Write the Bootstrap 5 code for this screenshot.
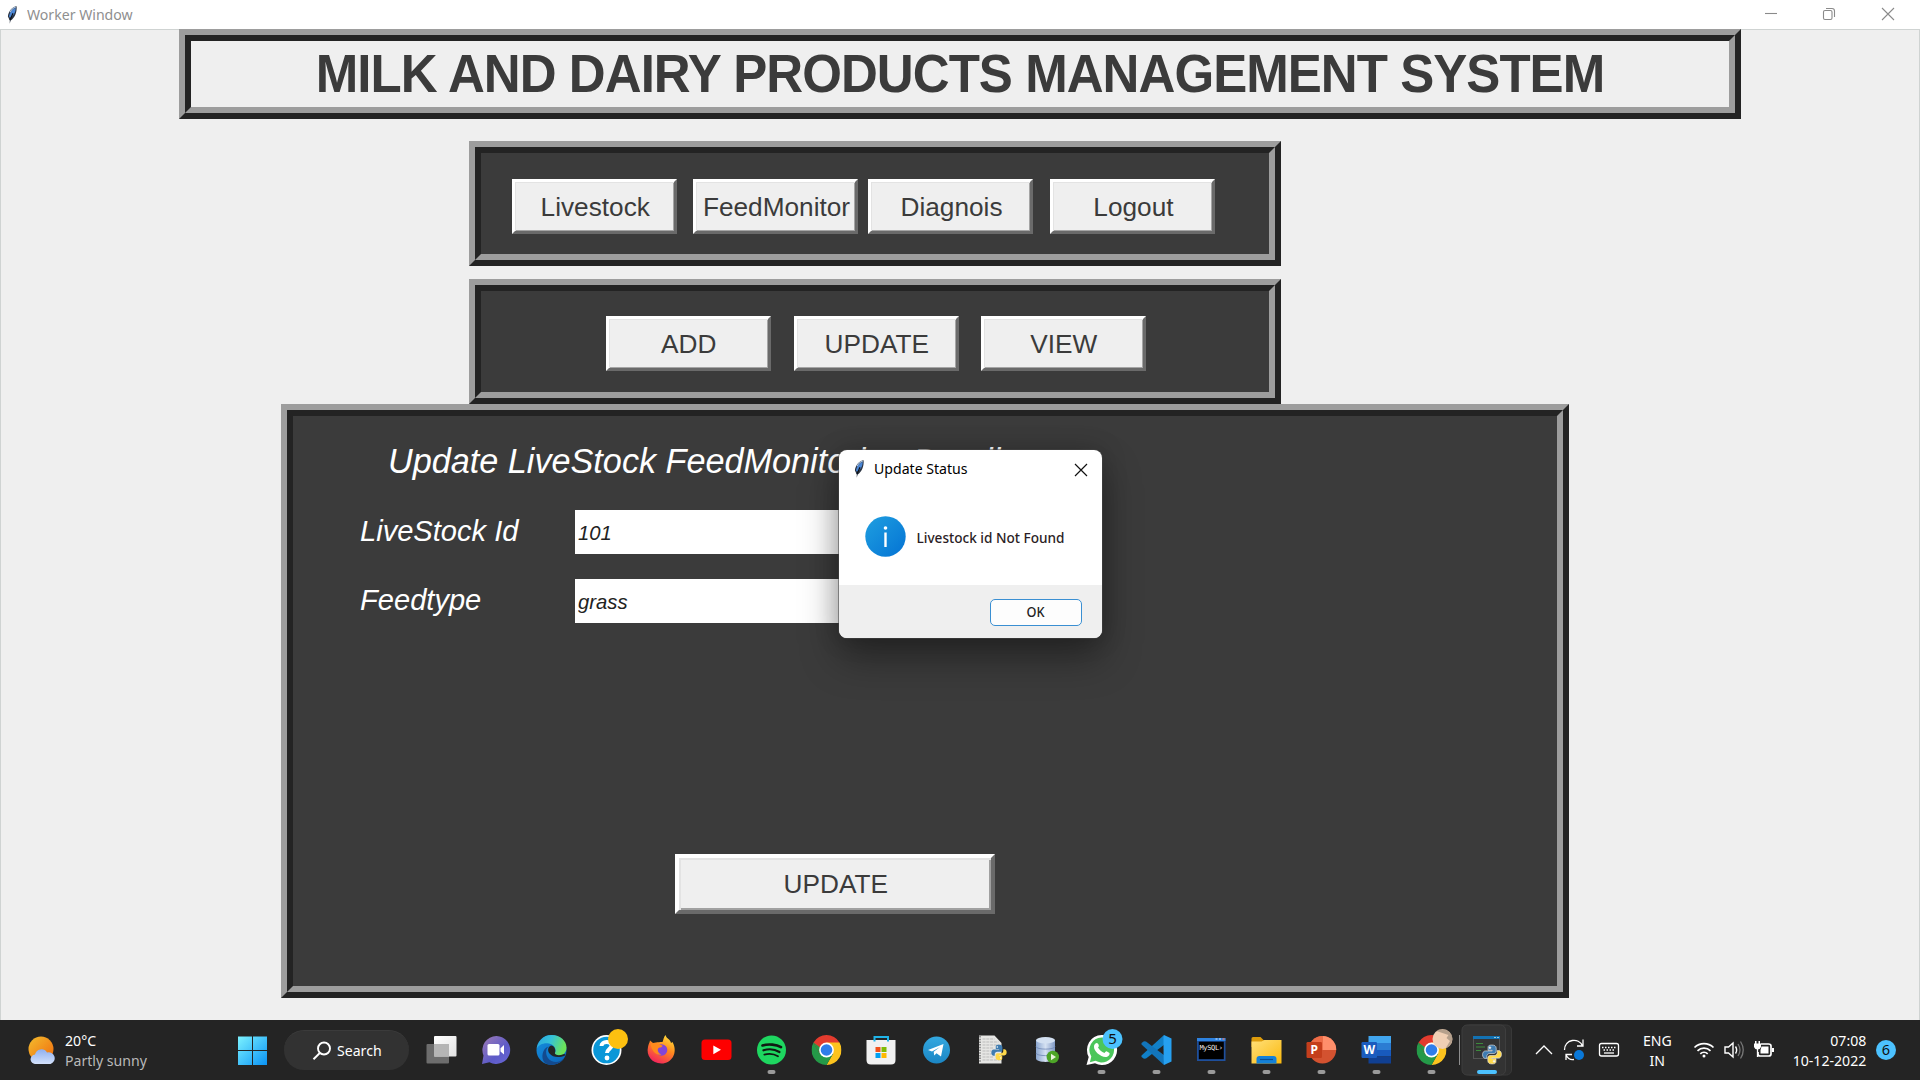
<!DOCTYPE html>
<html lang="en">
<head>
<meta charset="utf-8">
<title>Worker Window</title>
<link href="https://cdn.jsdelivr.net/npm/bootstrap@5.3.0/dist/css/bootstrap.min.css" rel="stylesheet">
<style>
body{width:1920px;height:1080px;overflow:hidden;font-family:"Noto Sans",sans-serif;background:#efefef}
.titlebar{height:29px;background:#fff;color:#8f8f8f;font-size:15px;line-height:29px}
.fit,.fit-c,.fit-r{display:inline-block;white-space:nowrap}
.fit{transform-origin:0 50%}
.fit-c{transform-origin:50% 50%}
.fit-r{transform-origin:100% 50%}
.narrow{transform:scaleX(.94)}
.client{height:991px;box-shadow:inset 1px 1px #cfd3d2,inset -1px 0 #cfd3d2;font-family:"Liberation Sans",Arial,sans-serif}
.ridge{border:6px solid;border-color:#9d9d9d #232323 #232323 #9d9d9d}
.ridge-in{border:6px solid;border-color:#232323 #9d9d9d #9d9d9d #232323;height:100%}
.dark{background:#3b3b3b}
.head-frame{width:1562px;height:90px;margin:0 auto}
.head-frame h1{font-size:53px;font-weight:700;letter-spacing:-1px;line-height:66px;margin:0;color:#3b3b3b;text-align:center;white-space:nowrap}
.head-frame .fit-c{transform:scaleX(.963)}
.nav-frame{width:812px;height:125px;margin-left:469px}
.tkbtn{width:165px;height:55px;background:#efefef;color:#3b3b3b;font-size:26.7px;line-height:50px;padding:0;border-width:3px;border-color:#fff #6a6a6a #6a6a6a #fff;border-radius:0;box-shadow:inset 1px 1px #e3e3e3,inset -1px -1px #a5a5a5;white-space:nowrap}
.tkbtn .fit-c{transform:translateX(.6px) scaleX(.982)}
.tkbtn-wide{width:320px;height:60px;border-width:4px;line-height:52px;box-shadow:inset 2px 2px #e3e3e3,inset -2px -2px #a0a0a0}
.main-frame{width:1288px;height:594px;margin-left:281px}
.main-frame .ridge-in{padding:25px 0 0 67px;color:#fff;font-style:italic}
.form-title{font-size:34.67px;line-height:40px;margin-left:28px}
.form-title .fit{transform:scaleX(.987)}
.line-row{height:44px}
.line-row .lbl{width:215px;font-size:29.1px;line-height:43px}
.entry{width:400px;height:44px;background:#fff;color:#222;font-size:21px;line-height:46px;padding-left:3px}
.entry .fit{transform:scaleX(.965)}
.dlg{position:absolute;left:839px;top:450px;width:263px;height:188px;border-radius:8px;background:#fff;overflow:hidden;box-shadow:0 0 0 1px rgba(70,70,70,.55)}
.dlg-shadow{position:absolute;left:839px;top:450px;width:263px;height:188px;border-radius:8px;box-shadow:0 20px 38px rgba(0,0,0,.36),0 0 26px rgba(0,0,0,.2)}
.dlg-foot{height:53px;background:#efefef}
.okbtn{width:92px;height:27px;border:1.5px solid #3a8fd2;border-radius:5px;background:#fdfdfd;font:500 13.5px/25px "Noto Sans",sans-serif;color:#222;padding:0}
.taskbar{height:60px;background:#242424;color:#fff;font-size:15px}
.weather{width:237px;padding-left:28px}
.two{line-height:20px;font-size:15px}
.pill{width:125px;height:40px;border-radius:20px;background:#323232;border-top:1px solid #3b3b3b;margin-right:5.2px}
.slot{width:55px;height:60px;flex:none}
.slot svg,.act svg{display:block}
.act{width:56px;height:60px;flex:none}
.tray{width:374px;flex:none;margin-right:24px}
</style>
<script src="https://cdn.jsdelivr.net/npm/bootstrap@5.3.0/dist/js/bootstrap.bundle.min.js"></script>
</head>
<body class="d-flex flex-column">
<svg width="0" height="0" class="position-absolute">
<defs>
<linearGradient id="win" gradientUnits="userSpaceOnUse" x1="1" y1="1" x2="30" y2="30"><stop offset="0" stop-color="#7df3ff"/><stop offset="1" stop-color="#0a93f5"/></linearGradient>
<linearGradient id="sun" x1="0" y1="0" x2="1" y2="1"><stop offset="0" stop-color="#f3bd2e"/><stop offset="1" stop-color="#f0690c"/></linearGradient>
<linearGradient id="cloud" x1="0" y1="0" x2="0" y2="1"><stop offset="0" stop-color="#8fb0f0"/><stop offset="1" stop-color="#d3e1fb"/></linearGradient>
<linearGradient id="info" x1="0" y1="0" x2="1" y2="1"><stop offset="0" stop-color="#1f9fe0"/><stop offset="1" stop-color="#0473d4"/></linearGradient>
<linearGradient id="team" x1="0" y1="0" x2="1" y2="1"><stop offset="0" stop-color="#a07cb5"/><stop offset=".6" stop-color="#5d5bc8"/><stop offset="1" stop-color="#6a67d6"/></linearGradient>
<linearGradient id="edgeA" x1="0" y1="0" x2="1" y2=".3"><stop offset="0" stop-color="#2aa5e0"/><stop offset=".5" stop-color="#35c1d8"/><stop offset="1" stop-color="#6be35a"/></linearGradient>
<linearGradient id="edgeB" x1="0" y1="0" x2="1" y2="1"><stop offset="0" stop-color="#1590df"/><stop offset="1" stop-color="#0b62b8"/></linearGradient>
<linearGradient id="ff" x1=".8" y1="0" x2=".3" y2="1"><stop offset="0" stop-color="#ffe23c"/><stop offset=".45" stop-color="#ff8a1e"/><stop offset="1" stop-color="#f2205e"/></linearGradient>
<linearGradient id="tg" x1="0" y1="0" x2="0" y2="1"><stop offset="0" stop-color="#33a8e0"/><stop offset="1" stop-color="#1b86c4"/></linearGradient>
<linearGradient id="fold" x1="0" y1="0" x2="1" y2="1"><stop offset="0" stop-color="#ffe07a"/><stop offset="1" stop-color="#fbb90d"/></linearGradient>
<linearGradient id="tv" x1="0" y1="0" x2="1" y2="1"><stop offset="0" stop-color="#fff"/><stop offset="1" stop-color="#e2e2e2"/></linearGradient>
<linearGradient id="db" x1="0" y1="0" x2="1" y2="0"><stop offset="0" stop-color="#8ba6cf"/><stop offset=".5" stop-color="#d5e1f2"/><stop offset="1" stop-color="#8099c4"/></linearGradient>
<symbol id="feather" viewBox="0 0 12 20"><path d="M10.500.5C6 1 1.500 6 1 11.500L3 16V19.500L4 16C8.500 13.500 11 7 10.500.5Z" fill="#2b3442"/><path d="M9.500 2C5.500 3.500 2.500 8 2.200 11.500L3.200 13C7 11 9.500 7 9.500 2Z" fill="#4a86d6"/><path d="M9.500 1.500C7 2 4.500 4.500 3.300 7" stroke="#a9c4e4" stroke-width="1.200" fill="none"/><path d="M6.500 8L3.300 15.500" stroke="#0c1118" stroke-width="1.300"/></symbol>
<symbol id="py" viewBox="0 0 20 20"><path d="M9.800 1C6 1 6.200 2.600 6.200 4.200V6H10.200V6.600H3.800C1.800 6.600 1 8.300 1 10.200S2 13.700 3.600 13.700H5V11.800C5 10.200 6.300 9 7.900 9H11.900C13.200 9 14 8 14 6.700V4C14 1.700 12.200 1 9.800 1Z" fill="#3f7cb0"/><path d="M10.200 19C14 19 13.800 17.400 13.800 15.800V14H9.800V13.400H16.200C18.200 13.400 19 11.700 19 9.800S18 6.300 16.400 6.300H15V8.200C15 9.800 13.700 11 12.100 11H8.100C6.800 11 6 12 6 13.300V16C6 18.300 7.800 19 10.200 19Z" fill="#ffd94a"/><circle cx="8" cy="3.500" r=".9" fill="#fff"/><circle cx="12" cy="16.500" r=".9" fill="#fff"/></symbol>
<symbol id="chrome" viewBox="-15 -15 30 30"><path d="M0 0L-12.990-7.500A15 15 0 0 1 12.990-7.500Z" fill="#e33b2e"/><path d="M0-7.500H12.990A15 15 0 0 1 0 15L6.500 3.750Z" fill="#fcc31e"/><path d="M-6.500 3.750L-12.990-7.500A15 15 0 0 0 0 15L6.500 3.750Z" fill="#249a48"/><path d="M-12.990-7.500L-6.500 3.750L0-7.500Z" fill="#e33b2e"/><path d="M-12.990-7.500L-6.500 3.750L-3 0Z" fill="#249a48"/><circle r="7.400" fill="#fff"/><circle r="5.800" fill="#2f7de9"/></symbol>
</defs>
</svg>

<header class="titlebar d-flex align-items-center flex-shrink-0">
  <svg width="11" height="20" style="margin-left:7px;margin-right:9px"><use href="#feather"/></svg>
  <span class="fit narrow">Worker Window</span>
  <svg class="ms-auto" width="160" height="29" fill="none" stroke="#8a8a8a" stroke-width="1.100"><path d="M5 13.500H17"/><rect x="63.500" y="10.500" width="8.500" height="9" rx="1.500"/><path d="M66 8.500H72C73.500 8.500 74.500 9.500 74.500 11V17"/><path d="M122 8L134 20M134 8L122 20"/></svg>
</header>

<main class="client flex-shrink-0">
  <div class="ridge head-frame"><div class="ridge-in"><h1><span class="fit-c">MILK AND DAIRY PRODUCTS MANAGEMENT SYSTEM</span></h1></div></div>

  <div class="ridge nav-frame dark" style="margin-top:22px"><nav class="ridge-in d-flex align-items-start" style="padding:26px 0 0 31px">
    <button class="btn tkbtn" style="margin-right:16px"><span class="fit-c">Livestock</span></button>
    <button class="btn tkbtn" style="margin-right:10px"><span class="fit-c">FeedMonitor</span></button>
    <button class="btn tkbtn" style="margin-right:17px"><span class="fit-c">Diagnois</span></button>
    <button class="btn tkbtn"><span class="fit-c">Logout</span></button>
  </nav></div>

  <div class="ridge nav-frame dark" style="margin-top:13px"><nav class="ridge-in d-flex align-items-start" style="padding:25px 0 0 125px;gap:22.500px">
    <button class="btn tkbtn"><span class="fit-c">ADD</span></button>
    <button class="btn tkbtn"><span class="fit-c">UPDATE</span></button>
    <button class="btn tkbtn"><span class="fit-c">VIEW</span></button>
  </nav></div>

  <div class="ridge main-frame dark"><section class="ridge-in">
    <div class="form-title"><span class="fit">Update LiveStock FeedMonitoring Details</span></div>
    <div class="line-row d-flex" style="margin-top:29px"><div class="lbl"><span class="fit">LiveStock Id</span></div><div class="entry"><span class="fit">101</span></div></div>
    <div class="line-row d-flex" style="margin-top:25px"><div class="lbl"><span class="fit">Feedtype</span></div><div class="entry"><span class="fit">grass</span></div></div>
    <button class="btn tkbtn tkbtn-wide" style="margin:231px 0 0 315px;font-style:normal"><span class="fit-c">UPDATE</span></button>
  </section></div>
</main>

<footer class="taskbar d-flex flex-shrink-0">
  <div class="weather d-flex align-items-center">
    <svg width="28" height="28" viewBox="0 0 28 28"><circle cx="13" cy="13" r="12.500" fill="url(#sun)"/><path d="M7.500 28A4.700 4.700 0 0 1 7 18.600A6.500 6.500 0 0 1 19 16.600A5.800 5.800 0 0 1 22.500 28Z" fill="url(#cloud)"/></svg>
    <div class="two" style="margin-left:9px"><div><span class="fit narrow">20°C</span></div><div style="color:#b9b9b9"><span class="fit narrow">Partly sunny</span></div></div>
  </div>
  <div style="width:47px" class="d-flex align-items-center"><svg width="31" height="31"><g fill="url(#win)"><path d="M1 1.500H15V15H1ZM16 1.500H30V15H16ZM1 16H15V30H1ZM16 16H30V30H16Z"/></g></svg></div>
  <div class="pill d-flex align-items-center align-self-center"><svg width="20" height="20" style="margin-left:28px;margin-right:5px" fill="none" stroke="#fff" stroke-width="1.900"><circle cx="12" cy="7.500" r="6"/><path d="M7.800 12L1.500 18.200"/></svg><span class="fit narrow">Search</span></div>

  <div class="slot"><svg width="55" height="60" viewBox="-27.500 -30 55 60"><rect x="-15" y="-6" width="22.500" height="19.500" rx="1" fill="#6d6d6d"/><rect x="-7.500" y="-14" width="22.500" height="20.500" rx="1" fill="url(#tv)"/><path d="M-7.500-6H7.500V6.500H-7.500Z" fill="#b5b5b5"/></svg></div>
  <div class="slot"><svg width="55" height="60" viewBox="-27.500 -30 55 60"><path d="M0-14A14 14 0 1 1-7 12.300L-14.500 14L-13 5.500A14 14 0 0 1 0-14Z" fill="url(#team)"/><rect x="-9" y="-6" width="12" height="11.500" rx="1.500" fill="#fff"/><path d="M4-1.800L7.500-5V4.500L4 1.500Z" fill="#fff"/></svg></div>
  <div class="slot"><svg width="55" height="60" viewBox="-27.500 -30 55 60"><circle r="15" fill="url(#edgeB)"/><path d="M-14.800-1.500C-13.500-9-8-15-0-15C9-15 15-9 15-2.500C15 2 12 5.500 8 5.500C5 5.500 2.800 4.500 3.500 3C5 .5 4-5-2.500-6.500C-8-7.500-13-5-14.800-1.500Z" fill="url(#edgeA)"/><path d="M-3-3.500C-7 0-6 8 0 11C5 13 9 11.500 12.500 8.500C10 13-1 18-7 12.500C-11 8-9-2-3-3.500Z" fill="#134a8e"/><path d="M-.5-4.500C-4-3-4 1-2 3.500C1 7 7 8.500 13.500 5.500C14.500 5 13.500 3 11 4.500C8 6 2.500 5 3.500 2.500C4.500 0 3-4.500-.5-4.500Z" fill="#242424"/></svg></div>
  <div class="slot"><svg width="55" height="60" viewBox="-27.500 -30 55 60"><circle r="15" fill="#fff"/><circle r="13.300" fill="#0a97d8"/><path d="M-5-4C-5-9 5-9.500 5-4.500C5-1 .5-1 .5 3" fill="none" stroke="#fff" stroke-width="4"/><circle cx=".5" cy="8" r="2.400" fill="#fff"/><circle cx="11.500" cy="-11" r="10" fill="#fdc010"/></svg></div>
  <div class="slot"><svg width="55" height="60" viewBox="-27.500 -30 55 60"><path d="M4-15C5-11 9-11 9.500-7L11-8C17 3 10 13.500 0 13.500C-10 13.500-15.500 5-13.500-3C-13-6-12-7-11.500-9.500L-8.500-7C-5-8 1-8 1-8C2-10 2-13 4-15Z" fill="url(#ff)"/><circle cx="0" cy="0" r="5.800" fill="#8245d8"/><path d="M-11-6C-6-8-3-6-.5-5C2-4.500 1-2.500-2-2.500C-5-2-4 3.500 0 4.500C-6 6-10 0-11-6Z" fill="#ff8a1c"/></svg></div>
  <div class="slot"><svg width="55" height="60" viewBox="-27.500 -30 55 60"><rect x="-15" y="-10.500" width="30" height="20.500" rx="3.500" fill="#fe0000"/><path d="M-3.200-4.500L4.500-.200L-3.200 4.200Z" fill="#fff"/></svg></div>
  <div class="slot"><svg width="55" height="60" viewBox="-27.500 -30 55 60"><circle r="14.500" fill="#1ed760"/><g fill="none" stroke="#101a12" stroke-linecap="round"><path d="M-9-4.500C-3-6.500 5-5.500 9.500-2.800" stroke-width="2.600"/><path d="M-8 .300C-3-1.300 3.500-.700 8 2" stroke-width="2.200"/><path d="M-7.200 4.600C-3 3.500 2.500 3.800 6.500 6.300" stroke-width="1.800"/></g><rect x="-4" y="20" width="8" height="4" rx="2" fill="#9a9a9a"/></svg></div>
  <div class="slot"><svg width="55" height="60" viewBox="-27.500 -30 55 60"><use href="#chrome" x="-15" y="-15" width="30" height="30"/></svg></div>
  <div class="slot"><svg width="55" height="60" viewBox="-27.500 -30 55 60"><path d="M-15-10H14V10Q14 14.500 9.500 14.500H-10.500Q-15 14.500-15 10Z" fill="#f1f1f1"/><path d="M-7-8.500V-13H6.500V-8.500" fill="none" stroke="#1fb4e8" stroke-width="2"/><path d="M-6-3H-1V2H-6Z" fill="#f1511b"/><path d="M0-3H5V2H0Z" fill="#80bb03"/><path d="M-6 3H-1V8H-6Z" fill="#00a1f1"/><path d="M0 3H5V8H0Z" fill="#ffb901"/></svg></div>
  <div class="slot"><svg width="55" height="60" viewBox="-27.500 -30 55 60"><circle r="13.500" fill="url(#tg)"/><path d="M-8.500 0L7-6L4.500 6.500L0 3.200L-2.300 5.500L-2.800 1.800L3.500-3L-4.500 1.500Z" fill="#fff"/></svg></div>
  <div class="slot"><svg width="55" height="60" viewBox="-27.500 -30 55 60"><path d="M-12.500-14.500H3L10-7V13.500H-12.500Z" fill="#e6e6e4"/><path d="M-11.500-14V13" stroke="#777" stroke-width="1.500" stroke-dasharray="1.500 1.200"/><path d="M-9-11H3M-9-8H7M-9-5H8M-9-2H2M-9 1H0M-9 4H0M-9 7H2M-9 10H8" stroke="#bbb" stroke-width="1" stroke-dasharray="3 .8"/><use href="#py" x="-1" y="-6" width="17" height="17"/></svg></div>
  <div class="slot"><svg width="55" height="60" viewBox="-27.500 -30 55 60"><path d="M-10.500-10V8.500C-10.500 13 8.500 13 8.500 8.500V-10Z" fill="url(#db)"/><path d="M-10.500-3.500C-10.500 0 8.500 0 8.500-3.500M-10.500 3C-10.500 6.500 8.500 6.500 8.500 3" stroke="#7088b5" fill="none" stroke-width=".8"/><ellipse cx="-1" cy="-9.700" rx="9.500" ry="3.200" fill="#d3e0f1"/><circle cx="6.300" cy="7" r="6.200" fill="#4da527"/><path d="M4.500 3.800L9.500 7L4.500 10.200Z" fill="#e8f5dc"/></svg></div>
  <div class="slot"><svg width="55" height="60" viewBox="-27.500 -30 55 60"><path d="M0-15A15 15 0 1 1-6.500 13.200L-15 15L-12.800 7A15 15 0 0 1 0-15Z" fill="#fff"/><path d="M.2-12.600A12.500 12.500 0 1 1-6 10.800L-11.600 12.200L-10.200 6.500A12.500 12.500 0 0 1 .2-12.600Z" fill="#4bc65b"/><path d="M-6.500-6C-5-8-3.500-7-3-5.500C-2.500-4-2.500-3.500-3.500-2.500C-2 0 0 2 3 3C4 2 4.500 1 5.500 1.500L8 3C8.500 5 6.500 7 4 7C-1 7-8 1-7.500-3.500C-7.500-4.500-7-5.500-6.500-6Z" fill="#fff"/><circle cx="11" cy="-11" r="10" fill="#4cc2ff"/><text x="11" y="-5.600" font-size="15" text-anchor="middle" fill="#111">5</text><rect x="-4" y="20" width="8" height="4" rx="2" fill="#9a9a9a"/></svg></div>
  <div class="slot"><svg width="55" height="60" viewBox="-27.500 -30 55 60"><path d="M7.500-15L-15 5.500V7L-12.500 8.800L-10.500 8.500L8-5.500Z" fill="#1180c8"/><path d="M7.500 15L-15-5.500V-7L-12.500-8.800L-10.500-8.500L8 5.500Z" fill="#1275bb"/><path d="M7.500-15L15-11.500V11.500L7.500 15Q7 14 7-13Z" fill="#26a0f0"/><rect x="-4" y="20" width="8" height="4" rx="2" fill="#9a9a9a"/></svg></div>
  <div class="slot"><svg width="55" height="60" viewBox="-27.500 -30 55 60"><rect x="-14.500" y="-12" width="28.500" height="23" fill="#1e4f9c"/><path d="M-14.500-12H14V-9H-14.500Z" fill="#2d82e0"/><path d="M4-11H6M7.500-11H9.500" stroke="#9fc8f5" stroke-width="1.300"/><path d="M11-11H13" stroke="#f0795c" stroke-width="1.300"/><rect x="-12.700" y="-8.300" width="25" height="17.500" fill="#000"/><text x="-12" y=".200" font-family="DejaVu Sans Mono,monospace" font-size="7" textLength="23.500" fill="#eee">MySQL›</text><rect x="-4" y="20" width="8" height="4" rx="2" fill="#9a9a9a"/></svg></div>
  <div class="slot"><svg width="55" height="60" viewBox="-27.500 -30 55 60"><path d="M-15-11.500Q-15-13-13.500-13H-6L-3-10H0V-3H-15Z" fill="#dd9c0c"/><path d="M-15-8.500H-5L-2-10H15V13.500H-15Z" fill="url(#fold)"/><path d="M-10 13.500V9Q-10 6-7 6H7Q10 6 10 9V13.500Z" fill="#1481d8"/><path d="M-6.500 9.500H6.500" stroke="#0a4f94" stroke-width="1.200"/><rect x="-4" y="20" width="8" height="4" rx="2" fill="#9a9a9a"/></svg></div>
  <div class="slot"><svg width="55" height="60" viewBox="-27.500 -30 55 60"><circle cx="1" cy="-.300" r="13.700" fill="#d35230"/><path d="M1-14A13.700 13.700 0 0 1 14.700 0H1Z" fill="#ff8f6b"/><path d="M1-14A13.700 13.700 0 0 0-12.700 0H1Z" fill="#ed6c47"/><rect x="-15" y="-8" width="15.500" height="16" rx="1.200" fill="#c43e1c"/><text x="-7.300" y="4.300" font-size="12" font-weight="700" text-anchor="middle" fill="#fff">P</text><rect x="-4" y="20" width="8" height="4" rx="2" fill="#9a9a9a"/></svg></div>
  <div class="slot"><svg width="55" height="60" viewBox="-27.500 -30 55 60"><path d="M-8-14H14.500V-7H-8Z" fill="#41a5ee"/><path d="M-8-7H14.500V0H-8Z" fill="#2b7cd3"/><path d="M-8 0H14.500V6.500H-8Z" fill="#185abd"/><path d="M-8 6.500H14.500V13.500H-8Z" fill="#103f91"/><rect x="-15" y="-8" width="15.500" height="16" rx="1.200" fill="#1b5cbe"/><text x="-7.300" y="4.300" font-size="12" font-weight="700" text-anchor="middle" fill="#fff">W</text><rect x="-4" y="20" width="8" height="4" rx="2" fill="#9a9a9a"/></svg></div>
  <div class="slot"><svg width="55" height="60" viewBox="-27.500 -30 55 60"><use href="#chrome" x="-15" y="-15" width="30" height="30"/><circle cx="11" cy="-11" r="10" fill="#f0cfb4"/><path d="M5-19C10-22.500 18-21 20.500-14C22-8 18-3 14-1.600L18.500-9L15-12L17-15L11-17Z" fill="#8d8072" opacity=".6"/><rect x="-4" y="20" width="8" height="4" rx="2" fill="#9a9a9a"/></svg></div>
  <div class="act"><svg width="56" height="60" viewBox="0 0 56 60"><path d="M.500 15V45" stroke="#8e8e8e"/><rect x="6" y="5" width="46.500" height="50" rx="5" fill="#2e2e2e" stroke="#383838"/><rect x="3" y="5" width="43.500" height="50" rx="5" fill="#333" stroke="#3e3e3e"/><rect x="14.500" y="16.500" width="26" height="22" fill="#343434" stroke="#555"/><path d="M14 16H41V19H14Z" fill="#1372b3"/><path d="M35 17.500H37M38 17.500H40" stroke="#9cd"/><path d="M17 23.500H24M17 27H26M17 30.500H22" stroke="#3c8a3c"/><use href="#py" x="22.500" y="24" width="21" height="21" stroke="#e8e8e8" stroke-width=".6"/><rect x="18" y="50" width="20" height="4" rx="2" fill="#4cc2ff"/></svg></div>
  <div class="tray d-flex align-items-center ms-auto">
    <svg width="106" height="60" viewBox="1522 1020 106 60" fill="none" stroke="#fff" stroke-width="1.300"><path d="M1536 1054L1544 1046L1552 1054"/><path d="M1564.500 1050C1564.500 1039 1579 1037 1582.500 1046M1583 1039.500V1046H1577M1566 1060V1054.500H1572M1566 1055C1568 1059 1571 1060 1574 1059.500"/><circle cx="1579" cy="1055" r="5" fill="#0a78d8" stroke="none"/><rect x="1599.500" y="1043.500" width="19" height="12.500" rx="2"/><path d="M1602 1047.500H1616M1603.500 1050H1615" stroke-dasharray="1.500 1.500"/><path d="M1604 1053H1614"/></svg>
    <div class="two text-center" style="width:58px"><div><span class="fit-c narrow">ENG</span></div><div><span class="fit-c narrow">IN</span></div></div>
    <svg width="98" height="60" viewBox="1686 1020 98 60" fill="none" stroke="#fff" stroke-width="1.700"><path d="M1694.500 1047.500A13.500 13.500 0 0 1 1713.500 1047.500M1697.500 1050.800A9.200 9.200 0 0 1 1710.500 1050.800M1700.300 1053.800A5.200 5.200 0 0 1 1707.700 1053.800"/><circle cx="1704" cy="1056" r="1.500" fill="#fff" stroke="none"/><path d="M1725 1047H1728.500L1733 1043V1057L1728.500 1053H1725Z" stroke-width="1.400"/><path d="M1735.500 1046.500Q1737.800 1050 1735.500 1053.500" stroke-width="1.400"/><path d="M1738 1044Q1742 1050 1738 1056M1740.500 1041.500Q1746 1050 1740.500 1058.500" stroke="#777" stroke-width="1.300"/><path d="M1761 1044H1768.500Q1771 1044 1771 1046V1054Q1771 1056 1768.500 1056H1760Q1758 1056 1758 1054V1052"/><path d="M1761.500 1046.500H1768.500V1053.500H1760.500V1050Z" fill="#fff" stroke="none"/><path d="M1773 1048V1052" stroke-width="2"/><path d="M1754 1043.500H1761V1047Q1760 1049.500 1757.500 1049.500T1754 1047ZM1755 1041H1756.500V1044H1755ZM1758.500 1041H1760V1044H1758.500Z" fill="#fff" stroke="none"/><path d="M1757.500 1049V1057" stroke-width="1.300"/></svg>
    <div class="two text-end" style="width:82px"><div><span class="fit-r narrow">07:08</span></div><div><span class="fit-r narrow">10-12-2022</span></div></div>
    <svg width="20" height="20" style="margin-left:10px"><circle cx="10" cy="10" r="10" fill="#4cc2ff"/><text x="10" y="15.300" font-size="14.500" text-anchor="middle" fill="#111">6</text></svg>
  </div>
</footer>

<div class="dlg-shadow"></div>
<div class="dlg d-flex flex-column" role="dialog">
  <div class="d-flex align-items-center" style="height:37px;color:#000;font-size:15px">
    <svg width="11" height="20" style="margin:0 9px 0 15px"><use href="#feather"/></svg><span class="fit narrow">Update Status</span>
    <svg width="14" height="14" class="ms-auto" style="margin-right:14px;margin-top:2px" stroke="#111" stroke-width="1.200"><path d="M1 1L13 13M13 1L1 13"/></svg>
  </div>
  <div class="d-flex flex-fill" style="padding:29px 0 0 26px">
    <svg width="41" height="41" viewBox="0 0 41 41" class="flex-shrink-0"><circle cx="20.500" cy="20.500" r="20.200" fill="url(#info)"/><circle cx="20.500" cy="12" r="1.800" fill="#fff"/><path d="M20.500 16.500V31" stroke="#fff" stroke-width="2.400"/></svg>
    <span style="margin:10px 0 0 10.500px;font-size:13.600px;font-weight:500;color:#2b1d25;line-height:24px">Livestock id Not Found</span>
  </div>
  <div class="dlg-foot d-flex justify-content-end" style="padding:14px 20px 0 0"><button class="okbtn"><span class="fit-c narrow">OK</span></button></div>
</div>
</body>
</html>
